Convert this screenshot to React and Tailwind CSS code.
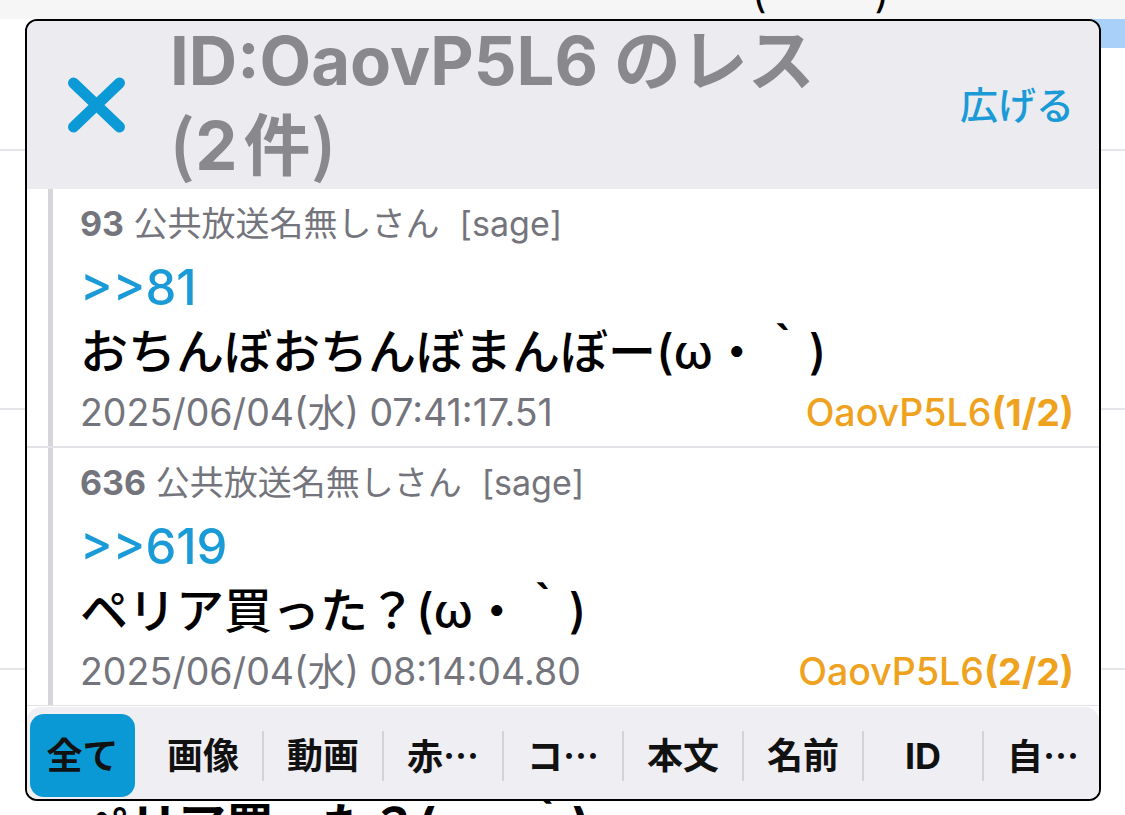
const SANS = "font-['Inter','Noto_Sans_CJK_JP',sans-serif]";
const CJK = "font-['Noto_Sans_CJK_JP',sans-serif]";

const posts = [
  {
    no: 93,
    name: "公共放送名無しさん",
    mail: "[sage]",
    anchor: ">>81",
    body: "おちんぼおちんぼまんぼー(ω・｀)",
    date: "2025/06/04(水) 07:41:17.51",
    id: "OaovP5L6",
    count: "(1/2)",
  },
  {
    no: 636,
    name: "公共放送名無しさん",
    mail: "[sage]",
    anchor: ">>619",
    body: "ペリア買った？(ω・｀)",
    date: "2025/06/04(水) 08:14:04.80",
    id: "OaovP5L6",
    count: "(2/2)",
  },
];

const tabs = ["画像", "動画", "赤…", "コ…", "本文", "名前", "ID", "自…"];

const Post = ({ post }) => (
  <div className="border-b-2 border-[#e2e2e7]">
    <div className="ml-[21px] border-l-[5px] border-[#d5d5da] pl-[27px] pr-[25px] pt-[13px] pb-[9px]">
      <div className="text-[34px] leading-[44px] text-[#74747d] whitespace-nowrap">
        <span className="font-bold">{post.no}</span> {post.name}
        <span className="ml-[20px]">{post.mail}</span>
      </div>
      <div className="mt-[10px] text-[49px] leading-[64px] font-medium text-[#1a9bd7]">
        {post.anchor}
      </div>
      <div className="text-[48px] leading-[64px] font-medium text-black whitespace-nowrap">
        {post.body}
      </div>
      <div className="mt-[5px] flex justify-between text-[37.5px] leading-[48px]">
        <span className="text-[#74747d]">{post.date}</span>
        <span className="font-medium text-[#eea21d]">
          {post.id}
          <span className="font-bold">{post.count}</span>
        </span>
      </div>
    </div>
  </div>
);

const Tab = ({ label, sep }) => {
  const dots = label.endsWith("…");
  return (
    <div className="w-[120px] shrink-0 flex items-center h-[83px]">
      <div
        className={
          sep
            ? "w-[2px] h-[50px] bg-[#d3d3d8]"
            : "w-[2px] h-[50px] bg-transparent"
        }
      />
      <div className="flex-1 text-center text-[36px] font-bold text-[#111] whitespace-nowrap">
        {dots ? (
          <>
            {label.slice(0, -1)}
            <span className={CJK}>…</span>
          </>
        ) : (
          label
        )}
      </div>
    </div>
  );
};

export default function App() {
  return (
    <div className={`relative w-[1125px] h-[815px] overflow-hidden bg-white ${SANS}`}>
      {/* page behind the popup */}
      <div className="h-[19px] overflow-hidden bg-[#f6f6f6] text-[40px] leading-[40px] text-black">
        <div className="-mt-[26px] flex">
          <span className="ml-[752px]">(</span>
          <span className="ml-[108px]">)</span>
        </div>
      </div>
      <div className="h-[132px] border-b-2 border-[#e6e6ea] flex justify-end">
        <div className="w-[40px] h-[29px] bg-[#a9d0f8]" />
      </div>
      <div className="h-[259px] border-b-2 border-[#e6e6ea]" />
      <div className="h-[260px] border-b-2 border-[#e6e6ea]" />
      <div className="pl-[82px] pt-[124px] text-[48px] leading-[64px] font-bold text-black whitespace-nowrap">
        ペリア買った？(ω・｀)
      </div>

      {/* popup */}
      <div className="absolute left-[25px] top-[19px] w-[1076px] h-[782px] border-2 border-black rounded-[12px] overflow-hidden bg-white flex flex-col">
        <div className="h-[168px] shrink-0 bg-[#ebebf0] flex overflow-hidden">
          <svg
            className="self-center ml-[39px] mr-[42px] shrink-0"
            width="62"
            height="60"
            viewBox="0 0 62 60"
          >
            <path
              d="M7.5 8 L53.5 52 M53.5 8 L7.5 52"
              stroke="#0b9ad6"
              strokeWidth="11"
              strokeLinecap="round"
              fill="none"
            />
          </svg>
          <div className="flex-1 text-[67px] leading-[80px] font-bold text-[#88888d] whitespace-nowrap">
            ID:OaovP5L6 のレス
            <br />
            <span className={CJK}>(</span>2<span className="ml-[6px]">件</span>
            <span className={CJK}>)</span>
          </div>
          <div className="self-center mr-[25px] text-[38px] font-medium text-[#1a9bd7]">
            広げる
          </div>
        </div>

        <div className="flex-1 overflow-hidden">
          {posts.map((p) => (
            <Post key={p.no} post={p} />
          ))}
        </div>

        <div className="h-[92px] shrink-0 mt-[1px] bg-[#eeeef3] rounded-t-[14px] pt-[7px] flex overflow-hidden">
          <div className="w-[115px] shrink-0 flex">
            <div className="ml-[3px] w-[105px] h-[83px] rounded-[14px] bg-[#0a99d4] flex items-center justify-center text-[36px] font-bold text-[#111]">
              全て
            </div>
          </div>
          {tabs.map((t, i) => (
            <Tab key={t} label={t} sep={i > 0} />
          ))}
        </div>
      </div>
    </div>
  );
}
